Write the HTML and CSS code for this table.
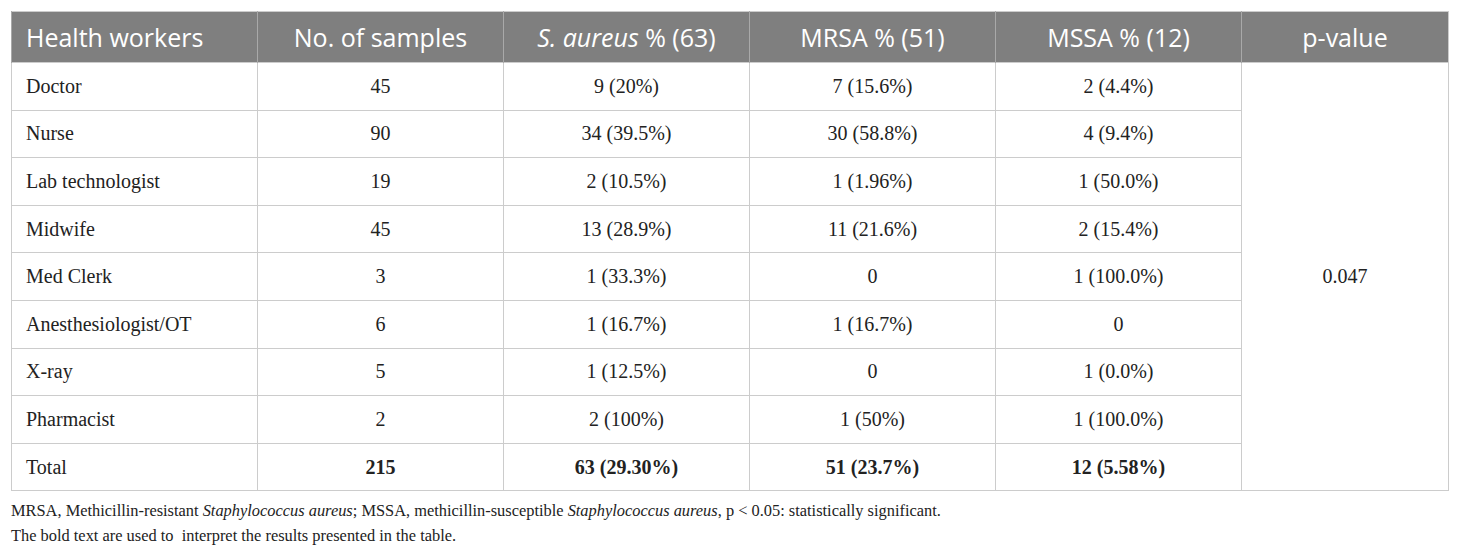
FILE: index.html
```html
<!DOCTYPE html>
<html lang="en">

<head>
  <meta charset="UTF-8">
  <link rel="stylesheet" href="styles.css">
</head>

<body>
  <div class="table-wrap">
    <table class="data-table">
      <thead>
        <tr>
          <th class="col-left">Health workers</th>
          <th>No. of samples</th>
          <th><i>S. aureus</i> % (63)</th>
          <th>MRSA % (51)</th>
          <th>MSSA % (12)</th>
          <th>p-value</th>
        </tr>
      </thead>
      <tbody>
        <tr>
          <td class="col-left">Doctor</td>
          <td>45</td>
          <td>9 (20%)</td>
          <td>7 (15.6%)</td>
          <td>2 (4.4%)</td>
          <td rowspan="9">0.047</td>
        </tr>
        <tr>
          <td class="col-left">Nurse</td>
          <td>90</td>
          <td>34 (39.5%)</td>
          <td>30 (58.8%)</td>
          <td>4 (9.4%)</td>
        </tr>
        <tr>
          <td class="col-left">Lab technologist</td>
          <td>19</td>
          <td>2 (10.5%)</td>
          <td>1 (1.96%)</td>
          <td>1 (50.0%)</td>
        </tr>
        <tr>
          <td class="col-left">Midwife</td>
          <td>45</td>
          <td>13 (28.9%)</td>
          <td>11 (21.6%)</td>
          <td>2 (15.4%)</td>
        </tr>
        <tr>
          <td class="col-left">Med Clerk</td>
          <td>3</td>
          <td>1 (33.3%)</td>
          <td>0</td>
          <td>1 (100.0%)</td>
        </tr>
        <tr>
          <td class="col-left">Anesthesiologist/OT</td>
          <td>6</td>
          <td>1 (16.7%)</td>
          <td>1 (16.7%)</td>
          <td>0</td>
        </tr>
        <tr>
          <td class="col-left">X-ray</td>
          <td>5</td>
          <td>1 (12.5%)</td>
          <td>0</td>
          <td>1 (0.0%)</td>
        </tr>
        <tr>
          <td class="col-left">Pharmacist</td>
          <td>2</td>
          <td>2 (100%)</td>
          <td>1 (50%)</td>
          <td>1 (100.0%)</td>
        </tr>
        <tr>
          <td class="col-left">Total</td>
          <td><b>215</b></td>
          <td><b>63 (29.30%)</b></td>
          <td><b>51 (23.7%)</b></td>
          <td><b>12 (5.58%)</b></td>
        </tr>
      </tbody>
    </table>
    <div class="table-notes">
      <p>MRSA, Methicillin-resistant <i>Staphylococcus aureus</i>; MSSA, methicillin-susceptible <i>Staphylococcus aureus</i>, p &lt; 0.05: statistically significant.</p>
      <p>The bold text are used to &nbsp;interpret the results presented in the table.</p>
    </div>
  </div>
</body>

</html>
```

FILE: styles.css
```css
body {
  margin: 0;
  background: #fff;
  color: #222;
  font-family: "Liberation Serif", serif;
}

.table-wrap {
  padding: 11px 11px 0 11px;
}

.data-table {
  width: 1438px;
  border-collapse: collapse;
  table-layout: fixed;
  border: 1px solid #ccc;
}

.data-table th {
  height: 51px;
  padding: 0 14px;
  background: #7f7f7f;
  color: #fff;
  font-family: "Open Sans", sans-serif;
  font-weight: normal;
  font-size: 25px;
  text-align: center;
  border-left: 1px solid #a9a9a9;
  box-sizing: border-box;
}

.data-table th:nth-child(-n+5) {
  width: 246px;
}

.data-table td {
  height: 47.6px;
  padding: 0 14px;
  font-size: 20px;
  text-align: center;
  border: 1px solid #ccc;
  box-sizing: border-box;
}

.data-table .col-left {
  text-align: left;
}

.table-notes {
  padding-top: 8px;
  font-size: 16.4px;
  line-height: 24.5px;
}

.table-notes p {
  margin: 0;
}
```
